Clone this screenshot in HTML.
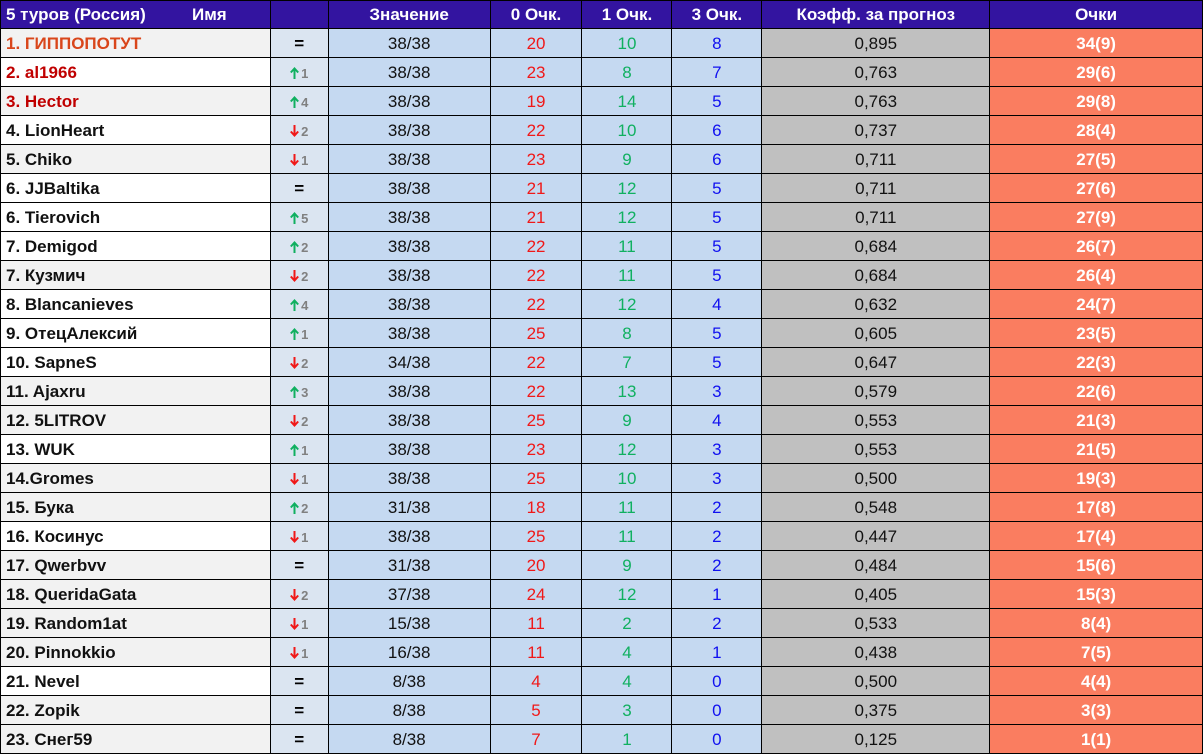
<!DOCTYPE html>
<html><head><meta charset="utf-8">
<style>
html,body{margin:0;padding:0;background:#fff;width:1203px;height:753px;overflow:hidden}
table{border-collapse:collapse;table-layout:fixed;font-family:"Liberation Sans","DejaVu Sans",sans-serif;font-size:17px;position:absolute;left:0;top:0}
td{border:1px solid #000;padding:2px 0 0 0;height:26px;text-align:center;white-space:nowrap;overflow:hidden;line-height:26px}
td>div.c{height:26px;overflow:hidden;line-height:26px}
tr.h td{background:#3314a0;color:#fff;font-weight:bold;height:26px;line-height:26px;padding:1px 0 0 0;font-size:17px;border-color:#000}
td.n{text-align:left;padding-left:5px;font-weight:bold;color:#111;background:#fff}
td.g{background:#f2f2f2}
td.a{background:#dbe5f1;font-weight:bold;font-size:17px}
td.v{background:#c5d9f1;color:#111}
td.z{background:#c5d9f1;color:#f01818}
td.o{background:#c5d9f1;color:#10b060}
td.t{background:#c5d9f1;color:#1010f0}
td.k{background:#c0c0c0;color:#111}
td.p{background:#fa7d60;color:#fff;font-weight:bold}
svg{vertical-align:-1px;margin-right:2px}
.s{color:#808080;font-size:13px;font-weight:bold}
</style></head><body>
<svg width="0" height="0" style="position:absolute"><defs>
<g id="u"><path d="M4.5 12V1.5M0.8 5.5L4.5 1.5L8.2 5.5" fill="none" stroke="#10b060" stroke-width="2"/></g>
<g id="d"><path d="M4.5 0V10.5M0.8 6.5L4.5 10.5L8.2 6.5" fill="none" stroke="#f01818" stroke-width="2"/></g>
</defs></svg>
<table>
<colgroup><col style="width:270px"><col style="width:58px"><col style="width:162px"><col style="width:92px"><col style="width:90px"><col style="width:90px"><col style="width:228px"><col style="width:213px"></colgroup>
<tr class="h"><td style="text-align:left;padding-left:5px;position:relative">5 туров (Россия)<span style="position:absolute;left:191px">Имя</span></td><td></td><td>Значение</td><td>0 Очк.</td><td>1 Очк.</td><td>3 Очк.</td><td>Коэфф. за прогноз</td><td>Очки</td></tr>
<tr><td class="n g" style="color:#d9461b">1. ГИППОПОТУТ</td><td class="a"><div class="c">=</div></td><td class="v">38/38</td><td class="z">20</td><td class="o">10</td><td class="t">8</td><td class="k">0,895</td><td class="p">34(9)</td></tr>
<tr><td class="n" style="color:#c00000">2. al1966</td><td class="a"><div class="c"><svg width="9" height="12"><use href="#u"/></svg><span class="s">1</span></div></td><td class="v">38/38</td><td class="z">23</td><td class="o">8</td><td class="t">7</td><td class="k">0,763</td><td class="p">29(6)</td></tr>
<tr><td class="n g" style="color:#c00000">3. Hector</td><td class="a"><div class="c"><svg width="9" height="12"><use href="#u"/></svg><span class="s">4</span></div></td><td class="v">38/38</td><td class="z">19</td><td class="o">14</td><td class="t">5</td><td class="k">0,763</td><td class="p">29(8)</td></tr>
<tr><td class="n">4. LionHeart</td><td class="a"><div class="c"><svg width="9" height="12"><use href="#d"/></svg><span class="s">2</span></div></td><td class="v">38/38</td><td class="z">22</td><td class="o">10</td><td class="t">6</td><td class="k">0,737</td><td class="p">28(4)</td></tr>
<tr><td class="n g">5. Chiko</td><td class="a"><div class="c"><svg width="9" height="12"><use href="#d"/></svg><span class="s">1</span></div></td><td class="v">38/38</td><td class="z">23</td><td class="o">9</td><td class="t">6</td><td class="k">0,711</td><td class="p">27(5)</td></tr>
<tr><td class="n">6. JJBaltika</td><td class="a"><div class="c">=</div></td><td class="v">38/38</td><td class="z">21</td><td class="o">12</td><td class="t">5</td><td class="k">0,711</td><td class="p">27(6)</td></tr>
<tr><td class="n">6. Tierovich</td><td class="a"><div class="c"><svg width="9" height="12"><use href="#u"/></svg><span class="s">5</span></div></td><td class="v">38/38</td><td class="z">21</td><td class="o">12</td><td class="t">5</td><td class="k">0,711</td><td class="p">27(9)</td></tr>
<tr><td class="n">7. Demigod</td><td class="a"><div class="c"><svg width="9" height="12"><use href="#u"/></svg><span class="s">2</span></div></td><td class="v">38/38</td><td class="z">22</td><td class="o">11</td><td class="t">5</td><td class="k">0,684</td><td class="p">26(7)</td></tr>
<tr><td class="n g">7. Кузмич</td><td class="a"><div class="c"><svg width="9" height="12"><use href="#d"/></svg><span class="s">2</span></div></td><td class="v">38/38</td><td class="z">22</td><td class="o">11</td><td class="t">5</td><td class="k">0,684</td><td class="p">26(4)</td></tr>
<tr><td class="n">8. Blancanieves</td><td class="a"><div class="c"><svg width="9" height="12"><use href="#u"/></svg><span class="s">4</span></div></td><td class="v">38/38</td><td class="z">22</td><td class="o">12</td><td class="t">4</td><td class="k">0,632</td><td class="p">24(7)</td></tr>
<tr><td class="n">9. ОтецАлексий</td><td class="a"><div class="c"><svg width="9" height="12"><use href="#u"/></svg><span class="s">1</span></div></td><td class="v">38/38</td><td class="z">25</td><td class="o">8</td><td class="t">5</td><td class="k">0,605</td><td class="p">23(5)</td></tr>
<tr><td class="n">10. SapneS</td><td class="a"><div class="c"><svg width="9" height="12"><use href="#d"/></svg><span class="s">2</span></div></td><td class="v">34/38</td><td class="z">22</td><td class="o">7</td><td class="t">5</td><td class="k">0,647</td><td class="p">22(3)</td></tr>
<tr><td class="n g">11. Ajaxru</td><td class="a"><div class="c"><svg width="9" height="12"><use href="#u"/></svg><span class="s">3</span></div></td><td class="v">38/38</td><td class="z">22</td><td class="o">13</td><td class="t">3</td><td class="k">0,579</td><td class="p">22(6)</td></tr>
<tr><td class="n g">12. 5LITROV</td><td class="a"><div class="c"><svg width="9" height="12"><use href="#d"/></svg><span class="s">2</span></div></td><td class="v">38/38</td><td class="z">25</td><td class="o">9</td><td class="t">4</td><td class="k">0,553</td><td class="p">21(3)</td></tr>
<tr><td class="n">13. WUK</td><td class="a"><div class="c"><svg width="9" height="12"><use href="#u"/></svg><span class="s">1</span></div></td><td class="v">38/38</td><td class="z">23</td><td class="o">12</td><td class="t">3</td><td class="k">0,553</td><td class="p">21(5)</td></tr>
<tr><td class="n g">14.Gromes</td><td class="a"><div class="c"><svg width="9" height="12"><use href="#d"/></svg><span class="s">1</span></div></td><td class="v">38/38</td><td class="z">25</td><td class="o">10</td><td class="t">3</td><td class="k">0,500</td><td class="p">19(3)</td></tr>
<tr><td class="n g">15. Бука</td><td class="a"><div class="c"><svg width="9" height="12"><use href="#u"/></svg><span class="s">2</span></div></td><td class="v">31/38</td><td class="z">18</td><td class="o">11</td><td class="t">2</td><td class="k">0,548</td><td class="p">17(8)</td></tr>
<tr><td class="n">16. Косинус</td><td class="a"><div class="c"><svg width="9" height="12"><use href="#d"/></svg><span class="s">1</span></div></td><td class="v">38/38</td><td class="z">25</td><td class="o">11</td><td class="t">2</td><td class="k">0,447</td><td class="p">17(4)</td></tr>
<tr><td class="n g">17. Qwerbvv</td><td class="a"><div class="c">=</div></td><td class="v">31/38</td><td class="z">20</td><td class="o">9</td><td class="t">2</td><td class="k">0,484</td><td class="p">15(6)</td></tr>
<tr><td class="n g">18. QueridaGata</td><td class="a"><div class="c"><svg width="9" height="12"><use href="#d"/></svg><span class="s">2</span></div></td><td class="v">37/38</td><td class="z">24</td><td class="o">12</td><td class="t">1</td><td class="k">0,405</td><td class="p">15(3)</td></tr>
<tr><td class="n g">19. Random1at</td><td class="a"><div class="c"><svg width="9" height="12"><use href="#d"/></svg><span class="s">1</span></div></td><td class="v">15/38</td><td class="z">11</td><td class="o">2</td><td class="t">2</td><td class="k">0,533</td><td class="p">8(4)</td></tr>
<tr><td class="n g">20. Pinnokkio</td><td class="a"><div class="c"><svg width="9" height="12"><use href="#d"/></svg><span class="s">1</span></div></td><td class="v">16/38</td><td class="z">11</td><td class="o">4</td><td class="t">1</td><td class="k">0,438</td><td class="p">7(5)</td></tr>
<tr><td class="n">21. Nevel</td><td class="a"><div class="c">=</div></td><td class="v">8/38</td><td class="z">4</td><td class="o">4</td><td class="t">0</td><td class="k">0,500</td><td class="p">4(4)</td></tr>
<tr><td class="n g">22. Zopik</td><td class="a"><div class="c">=</div></td><td class="v">8/38</td><td class="z">5</td><td class="o">3</td><td class="t">0</td><td class="k">0,375</td><td class="p">3(3)</td></tr>
<tr><td class="n g">23. Снег59</td><td class="a"><div class="c">=</div></td><td class="v">8/38</td><td class="z">7</td><td class="o">1</td><td class="t">0</td><td class="k">0,125</td><td class="p">1(1)</td></tr>
</table>
</body></html>
